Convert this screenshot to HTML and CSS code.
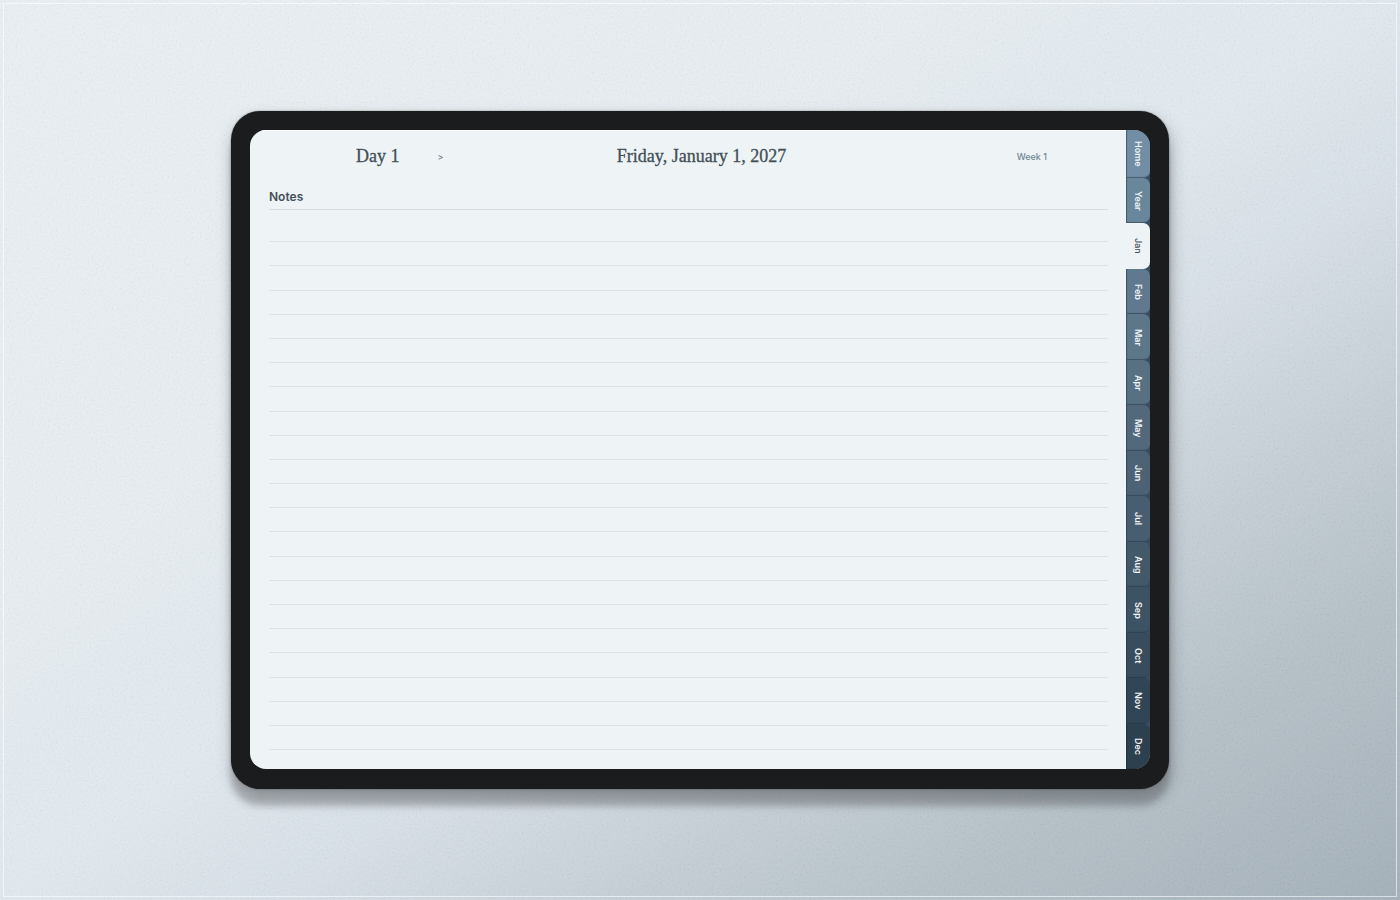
FILE: index.html
```html
<!DOCTYPE html>
<html lang="en">

<head>
    <meta charset="UTF-8">
    <meta name="viewport" content="width=device-width, initial-scale=1.0">
    <title>Daily Planner 2027</title>
    <link rel="stylesheet" href="styles.css">
</head>

<body>
    <svg class="paper" aria-hidden="true">
        <filter id="grain">
            <feTurbulence type="fractalNoise" baseFrequency="0.5" numOctaves="2" />
            <feColorMatrix type="matrix" values="2 0 0 0 -0.5  2 0 0 0 -0.5  2 0 0 0 -0.5  0 0 0 0 1" />
        </filter>
        <rect width="100%" height="100%" filter="url(#grain)" />
    </svg>
    <div class="frame"></div>

    <main class="tablet">
        <div class="screen">
            <section class="page">
                <header class="page-header">
                    <div class="day">
                        <h2 class="title">Day 1</h2>
                        <a class="small-link" href="#next">&gt;</a>
                    </div>
                    <h1 class="title">Friday, January 1, 2027</h1>
                    <a class="small-link week" href="#week">Week 1</a>
                </header>
                <h3 class="notes-title">Notes</h3>
                <div class="lines" id="lines"></div>
            </section>
            <nav class="tabs" id="tabs"></nav>
        </div>
    </main>

    <script>
        const tabs = [
            ['Home', '#718ea5'], ['Year', '#69879a'], ['Jan', '#eef4f6'],
            ['Feb', '#60798f'], ['Mar', '#5d778a'], ['Apr', '#587084'],
            ['May', '#53697b'], ['Jun', '#4d6375'], ['Jul', '#485e70'],
            ['Aug', '#435868'], ['Sep', '#3d5262'], ['Oct', '#384c5c'],
            ['Nov', '#324555'], ['Dec', '#2d404e']
        ];
        const nav = document.getElementById('tabs');

        tabs.forEach(([name, color]) => {
            const a = document.createElement('a');
            a.className = name === 'Jan' ? 'tab active' : 'tab';
            a.href = '#' + name.toLowerCase();
            a.textContent = name;
            a.style.backgroundColor = color;
            nav.appendChild(a);
        });

        // ruled lines
        for (let i = 0; i < 22; i++) {
            const line = document.createElement('div');
            line.className = 'line';
            document.getElementById('lines').appendChild(line);
        }
    </script>
</body>

</html>
```
FILE: styles.css
```css
* {
    box-sizing: border-box;
}

body {
    margin: 0;
    min-height: 100vh;
    display: flex;
    align-items: center;
    justify-content: center;
    font-family: Inter, "Liberation Sans", sans-serif;
    color: #434f56;
    background: linear-gradient(to bottom right, #e9eff2 0%, #e7edf1 34%, #e1e9ef 50%, #d8e0e7 60%, #c6cfd6 72%, #b7c2c9 82%, #a5b1ba 100%);
}

a {
    text-decoration: none;
}

.paper {
    position: absolute;
    inset: 0;
    width: 100%;
    height: 100%;
    opacity: 0.03;
}

.frame {
    position: absolute;
    inset: 3px;
    border: 1px solid rgba(255, 255, 255, 0.6);
    pointer-events: none;
}

.tablet {
    position: relative;
    width: 67vw;
    padding: 19px 19px 20px;
    background: #1b1c1e;
    border-radius: 29px;
    box-shadow: 0 0 2px rgba(0, 0, 0, 0.4), 0 17px 6px rgba(80, 80, 84, 0.3), 2px 8px 16px rgba(70, 75, 80, 0.4);
}

.screen {
    display: flex;
    aspect-ratio: 900 / 639;
    border-radius: 16px;
    overflow: hidden;
    background: #eef4f6;
}

.page {
    flex: 1;
    display: flex;
    flex-direction: column;
    padding: 0 18px 19px 19px;
    box-shadow: inset 0 1px 1px #fff;
}

.page-header {
    display: grid;
    grid-template-columns: 1fr auto 1fr;
    align-items: center;
    height: 52px;
    padding: 0 61px 0 87px;
}

.day {
    display: flex;
    align-items: center;
    gap: 38px;
}

.title {
    margin: 0;
    font-family: "Liberation Serif", serif;
    font-size: 18px;
    font-weight: normal;
    -webkit-text-stroke: 0.3px #434f56;
}

.small-link {
    font-size: 9px;
    font-weight: 500;
    color: #718694;
}

.week {
    text-align: right;
}

.notes-title {
    margin: 0;
    height: 28px;
    line-height: 30px;
    font-size: 12px;
    font-weight: 600;
    border-bottom: 1px solid #d7dee2;
}

.lines {
    flex: 1;
    display: flex;
    flex-direction: column;
    padding-top: 8px;
}

.line {
    flex: 1;
    border-bottom: 1px solid #dce3e7;
}

.tabs {
    display: flex;
    flex-direction: column;
    width: 24px;
    background: #394e5e;
}

.tab {
    flex: 1;
    display: flex;
    align-items: center;
    justify-content: center;
    writing-mode: vertical-rl;
    font-size: 9px;
    font-weight: 600;
    color: #f0f5f8;
    border-radius: 0 7px 7px 0;
    box-shadow: inset 1px -1px 1px rgba(30, 48, 62, 0.5);
}

.tab:first-child {
    flex: 0 0 48px;
}

.tab.active {
    color: #434f56;
    font-weight: 500;
    box-shadow: none;
}
```
